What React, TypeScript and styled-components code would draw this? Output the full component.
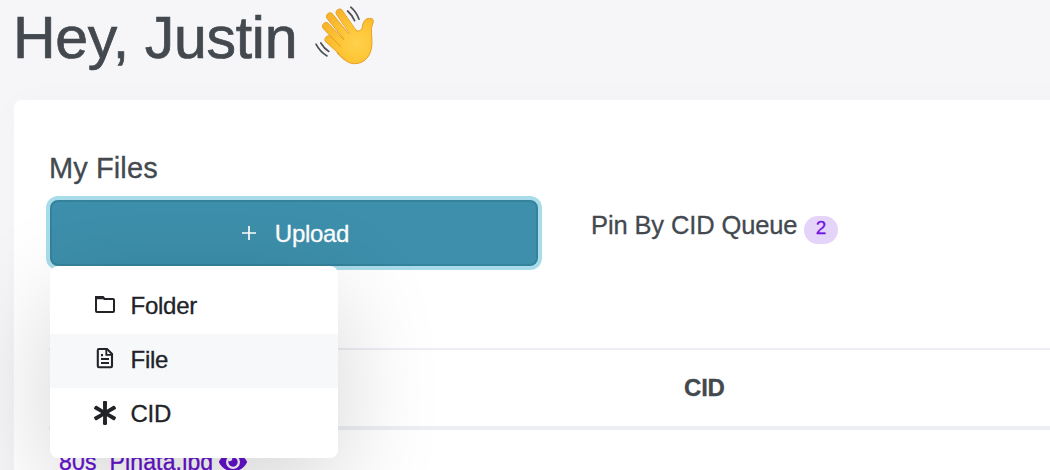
import React from "react";
import styled, { createGlobalStyle } from "styled-components";
import { FaAsterisk, FaEye } from "react-icons/fa";

const GlobalStyle = createGlobalStyle`
  * { box-sizing: border-box; }
  html, body { margin: 0; height: 470px; overflow: hidden; }
  body {
    background: #f6f6f9;
    color: #43494f;
    font-family: "Liberation Sans", Arial, sans-serif;
    font-size: 24px;
    -webkit-text-stroke: 0.3px currentColor;
  }
`;

const Page = styled.main`
  height: 470px;
  overflow: hidden;
  padding-left: 14px;
`;

const Greeting = styled.h1`
  display: flex;
  align-items: flex-start;
  height: 100px;
  margin: 0 0 0 -1px;
  padding-top: 4px;
  font-size: 59px;
  line-height: 68px;
  font-weight: 400;
  letter-spacing: -0.3px;
  white-space: nowrap;
  -webkit-text-stroke-width: 0.7px;
`;

const Wave = styled.svg`
  width: 60px;
  height: 60px;
  margin: 1px 0 0 18px;
`;

const Card = styled.section`
  height: 420px;
  width: 1100px;
  padding: 50px 0 0 36px;
  background: #fff;
  border-radius: 8px;
  box-shadow: 0 0 36px rgba(20, 20, 50, 0.02);
`;

const Toolbar = styled.div`
  display: flex;
  height: 198px;
`;

const Uploads = styled.div`
  position: relative;
  width: 488px;
`;

const Title = styled.h2`
  margin: 0 0 0 -1px;
  height: 50px;
  font-size: 29px;
  line-height: 36px;
  font-weight: 400;
  letter-spacing: 0.1px;
`;

const UploadButton = styled.button`
  display: flex;
  align-items: center;
  justify-content: center;
  gap: 18px;
  width: 100%;
  height: 66px;
  padding: 1px 0 0 2px;
  border: 2px solid #35829c;
  border-radius: 8px;
  background: #3d8fab;
  box-shadow: 0 0 0 4px #a9dcea;
  color: #fff;
  font: 24px "Liberation Sans", Arial, sans-serif;
  letter-spacing: -0.3px;
  -webkit-text-stroke: 0.3px currentColor;

  svg { margin-top: -2px; }
`;

const Menu = styled.ul`
  position: absolute;
  top: 116px;
  left: 0;
  width: 288px;
  height: 192px;
  margin: 0;
  padding: 14px 0 16px;
  list-style: none;
  background: #fff;
  border-radius: 8px;
  box-shadow: 0 30px 100px rgba(0, 0, 0, 0.17);
`;

const MenuItem = styled.li<{ $active?: boolean }>`
  display: flex;
  align-items: center;
  gap: 13.5px;
  height: 54px;
  padding: 0 0 2px 43px;
  background: ${(p) => (p.$active ? "#f7f8fa" : "transparent")};
  color: #212327;
  font-size: 24px;
  letter-spacing: -0.25px;

  svg { width: 24px; height: 24px; margin-top: -5px; }
`;

const Asterisk = styled(FaAsterisk)`
  position: relative;
  top: 1px;
`;

const Queue = styled.div`
  display: flex;
  align-items: flex-start;
  padding: 59px 0 0 53px;
  font-size: 25.5px;
  line-height: 32px;
  letter-spacing: -0.12px;
`;

const Badge = styled.span`
  width: 34px;
  height: 28px;
  margin: 7px 0 0 7px;
  padding-right: 1px;
  border-radius: 14px;
  background: #e5d4fa;
  color: #6f13df;
  font-size: 19px;
  line-height: 24px;
  text-align: center;
`;

const Table = styled.div`
  margin-left: -1px;
`;

const HeadRow = styled.div`
  display: flex;
  align-items: center;
  height: 82px;
  padding-left: 635px;
  border-top: 2px solid #eceef4;
  border-bottom: 4px solid #eceef4;
  font-size: 24px;
  font-weight: 700;
  letter-spacing: -0.2px;
`;

const FileLink = styled.div`
  display: flex;
  align-items: center;
  gap: 6px;
  padding: 18px 0 0 10px;
  color: #6610d0;
  font-size: 23px;
  line-height: 28px;
  letter-spacing: 0.15px;

  svg { width: 28px; height: 26px; }
`;

const PlusIcon = () => (
  <svg width="16" height="16" viewBox="0 0 16 16" stroke="#fff" strokeWidth="1.7">
    <path d="M8 1v14M1 8h14" />
  </svg>
);

const FolderIcon = () => (
  <svg viewBox="0 0 24 24" fill="none" stroke="currentColor" strokeWidth="2">
    <path d="M3 5.2h7.2l1.3 1.9H20a1 1 0 0 1 1 1V19a1 1 0 0 1-1 1H4a1 1 0 0 1-1-1z" />
    <path d="M2 4.9q0-1 1-1h6.7q.6 0 1 .5l1.4 2.8H2z" fill="currentColor" stroke="none" />
  </svg>
);

const FileIcon = () => (
  <svg viewBox="0 0 24 24" fill="none" stroke="currentColor" strokeWidth="2.1">
    <path d="M6 3h8l5 5v12a1.2 1.2 0 0 1-1.2 1.2H6A1.2 1.2 0 0 1 4.8 20V4.2A1.2 1.2 0 0 1 6 3z" />
    <path d="M13.3 3v5.8H19M8 13h8M8 17h8" strokeWidth="1.8" />
    <path d="M8 9.1h2" />
  </svg>
);

const fingers = [
  "M328.5 39.5L346 55",
  "M326 26.2L345 46",
  "M330 16.5L350 41",
  "M339.6 12.7L355 35",
];

const WavingHand = () => (
  <Wave viewBox="315 5 60 60" fill="none" aria-label="waving hand">
    <defs>
      <radialGradient id="skin" gradientUnits="userSpaceOnUse" cx="357" cy="43" r="36">
        <stop offset="0" stopColor="#ffd14c" />
        <stop offset=".55" stopColor="#fdc433" />
        <stop offset="1" stopColor="#f8b42b" />
      </radialGradient>
    </defs>
    <path
      d="M355 29.5Q360 33 361.8 28.5L363 24C364.5 18.5 369 17.5 372.3 19C375 20.8 372 24 371.5 28.5C371 34 372.4 38 371.8 45.5C371 56.5 364 63.7 354.5 63.7C348.5 63.7 344 60 337 53L344 40z"
      fill="url(#skin)"
      stroke="#e89d25"
      strokeWidth="1"
      strokeLinejoin="round"
    />
    {fingers.map((d) => (
      <g key={d} strokeLinecap="round">
        <path d={d} stroke="#e39a24" strokeWidth="7.8" />
        <path d={d} stroke="url(#skin)" strokeWidth="6.7" />
      </g>
    ))}
    <path
      d="M352 32L357 31.5L368 34L370.5 46C369.5 56 363 62.4 354 62.4C349 62.4 345 59 340.5 55L341 46L346 36z"
      fill="url(#skin)"
    />
    <path
      d="M350.8 7.2q5.4 4.6 8.2 12M347.6 11q4.5 4 7 9.6M316 44.2q4.2 8 11 11.7M320.8 43q3.4 5.7 8 8.4"
      stroke="#4b5155"
      strokeWidth="1.7"
      strokeLinecap="round"
    />
  </Wave>
);

export default function App() {
  return (
    <>
      <GlobalStyle />
      <Page>
        <Greeting>
          Hey, Justin
          <WavingHand />
        </Greeting>
        <Card>
          <Toolbar>
            <Uploads>
              <Title>My Files</Title>
              <UploadButton>
                <PlusIcon />
                Upload
              </UploadButton>
              <Menu>
                <MenuItem><FolderIcon />Folder</MenuItem>
                <MenuItem $active><FileIcon />File</MenuItem>
                <MenuItem><Asterisk />CID</MenuItem>
              </Menu>
            </Uploads>
            <Queue>
              Pin By CID Queue
              <Badge>2</Badge>
            </Queue>
          </Toolbar>
          <Table>
            <HeadRow>CID</HeadRow>
            <FileLink>
              80s_Pinata.jpg
              <FaEye />
            </FileLink>
          </Table>
        </Card>
      </Page>
    </>
  );
}
